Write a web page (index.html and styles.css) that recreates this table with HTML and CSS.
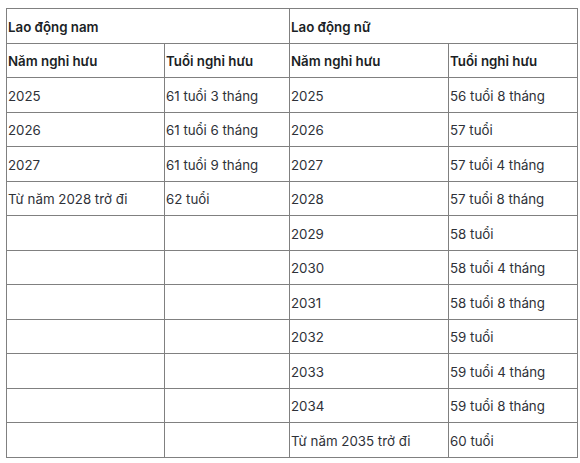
FILE: index.html
```html
<!DOCTYPE html>
<html lang="vi">
<head>
<meta charset="utf-8">
<link rel="stylesheet" href="styles.css">
</head>
<body>
<table class="tbl">
  <colgroup>
    <col class="c1"><col class="c2"><col class="c3"><col class="c4">
  </colgroup>
  <tr class="head"><td colspan="2">Lao động nam</td><td colspan="2">Lao động nữ</td></tr>
  <tr class="head"><td>Năm nghỉ hưu</td><td>Tuổi nghỉ hưu</td><td>Năm nghỉ hưu</td><td>Tuổi nghỉ hưu</td></tr>
  <tr><td>2025</td><td>61 tuổi 3 tháng</td><td>2025</td><td>56 tuổi 8 tháng</td></tr>
  <tr><td>2026</td><td>61 tuổi 6 tháng</td><td>2026</td><td>57 tuổi</td></tr>
  <tr><td>2027</td><td>61 tuổi 9 tháng</td><td>2027</td><td>57 tuổi 4 tháng</td></tr>
  <tr><td>Từ năm 2028 trở đi</td><td>62 tuổi</td><td>2028</td><td>57 tuổi 8 tháng</td></tr>
  <tr><td></td><td></td><td>2029</td><td>58 tuổi</td></tr>
  <tr><td></td><td></td><td>2030</td><td>58 tuổi 4 tháng</td></tr>
  <tr><td></td><td></td><td>2031</td><td>58 tuổi 8 tháng</td></tr>
  <tr><td></td><td></td><td>2032</td><td>59 tuổi</td></tr>
  <tr><td></td><td></td><td>2033</td><td>59 tuổi 4 tháng</td></tr>
  <tr><td></td><td></td><td>2034</td><td>59 tuổi 8 tháng</td></tr>
  <tr><td></td><td></td><td>Từ năm 2035 trở đi</td><td>60 tuổi</td></tr>
</table>
</body>
</html>
```
FILE: styles.css
```css
html, body {
  margin: 0;
  padding: 0;
  background: #ffffff;
}
body {
  padding: 8px 0 0 6px;
  font-family: Inter, "Noto Sans", sans-serif;
  font-size: 13.3px;
  color: #2e3138;
}
.tbl {
  border-collapse: collapse;
  table-layout: fixed;
  width: 571px;
}
.c1 { width: 158px; }
.c2 { width: 125px; }
.c3 { width: 159px; }
.c4 { width: 129px; }
.tbl td {
  border: 1px solid #808080;
  height: 31.5px;
  padding: 2px 0 0 1px;
  vertical-align: middle;
  white-space: nowrap;
  overflow: hidden;
}
.head td {
  font-weight: 600;
  color: #1c1f26;
}
```
